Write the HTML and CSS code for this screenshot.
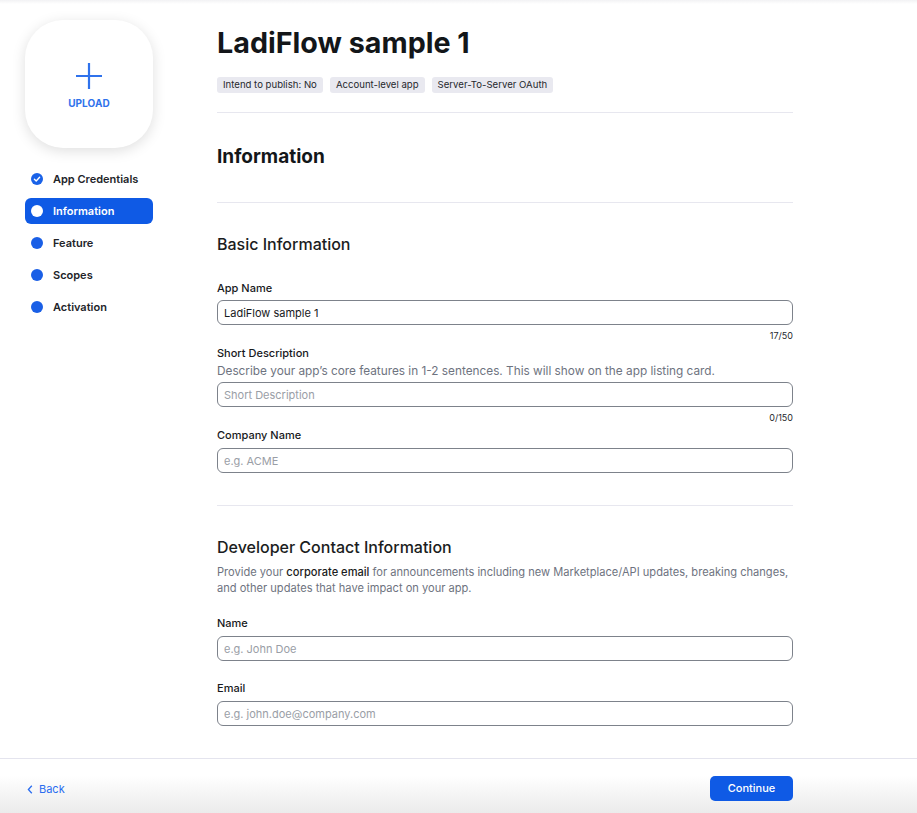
FILE: index.html
```html
<!DOCTYPE html>
<html lang="en">
<head>
<meta charset="utf-8">
<title>LadiFlow sample 1</title>
<link rel="stylesheet" href="styles.css">
</head>
<body>
<div class="page">
  <div class="content">
    <aside class="sidebar">
      <div class="upload">
        <svg class="plus" width="26" height="26" viewBox="0 0 26 26"><path d="M13 0V26M0 13H26" stroke="#2f72ec" stroke-width="2.2" fill="none"/></svg>
        <span class="upload-text">UPLOAD</span>
      </div>
      <ul class="steps">
        <li class="step done">
          <span class="dot check"><svg width="12" height="12" viewBox="0 0 12 12"><circle cx="6" cy="6" r="6" fill="#1a62e8"/><path d="M3.4 6.2 5.2 7.9 8.6 4.3" stroke="#fff" stroke-width="1.4" fill="none" stroke-linecap="round" stroke-linejoin="round"/></svg></span>
          <span class="label">App Credentials</span>
        </li>
        <li class="step active"><span class="dot"></span><span class="label">Information</span></li>
        <li class="step"><span class="dot"></span><span class="label">Feature</span></li>
        <li class="step"><span class="dot"></span><span class="label">Scopes</span></li>
        <li class="step"><span class="dot"></span><span class="label">Activation</span></li>
      </ul>
    </aside>
    <main class="main">
      <h1 class="title">LadiFlow sample 1</h1>
      <div class="chips">
        <span class="chip">Intend to publish: No</span>
        <span class="chip">Account-level app</span>
        <span class="chip">Server-To-Server OAuth</span>
      </div>
      <hr class="divider first">
      <h2 class="section-title">Information</h2>
      <hr class="divider second">
      <h3 class="sub-title">Basic Information</h3>

      <div class="field f-appname">
        <label class="field-label">App Name</label>
        <input class="input" type="text" value="LadiFlow sample 1">
        <div class="counter">17/50</div>
      </div>
      <div class="field f-short">
        <label class="field-label">Short Description</label>
        <p class="help short-help">Describe your app’s core features in 1-2 sentences. This will show on the app listing card.</p>
        <input class="input" type="text" placeholder="Short Description">
        <div class="counter">0/150</div>
      </div>
      <div class="field f-company">
        <label class="field-label">Company Name</label>
        <input class="input" type="text" placeholder="e.g. ACME">
      </div>

      <hr class="divider third">
      <h3 class="sub-title dev">Developer Contact Information</h3>
      <p class="help desc">Provide your <strong>corporate email</strong> for announcements including new Marketplace/API updates, breaking changes, and other updates that have impact on your app.</p>
      <div class="field f-name">
        <label class="field-label">Name</label>
        <input class="input" type="text" placeholder="e.g. John Doe">
      </div>
      <div class="field f-email">
        <label class="field-label">Email</label>
        <input class="input" type="text" placeholder="e.g. john.doe@company.com">
      </div>
    </main>
  </div>
  <footer class="footer">
    <a class="back" href="#"><svg width="6" height="9" viewBox="0 0 6 9"><path d="M4.8 0.8 1.4 4.5 4.8 8.2" stroke="#2a6df0" stroke-width="1.3" fill="none"/></svg><span>Back</span></a>
    <button class="continue" type="button">Continue</button>
  </footer>
</div>
</body>
</html>
```

FILE: styles.css
```css
* { box-sizing: border-box; }
html, body { margin: 0; padding: 0; }
body {
  font-family: Inter, "Noto Sans", sans-serif;
  color: #131619;
  background: linear-gradient(#f2f2f4, #ffffff 4px);
}
.page {
  height: 813px;
  display: flex;
  flex-direction: column;
}
.content {
  flex: 1;
  display: flex;
  overflow: hidden;
  min-height: 0;
}
.sidebar {
  width: 153px;
  padding: 20px 0 0 25px;
  flex-shrink: 0;
}
.upload {
  width: 128px;
  height: 128px;
  border-radius: 38px;
  background: #fff;
  box-shadow: 0 3px 14px rgba(0, 0, 0, 0.13);
  display: flex;
  flex-direction: column;
  align-items: center;
  padding-top: 43px;
}
.upload-text {
  margin-top: 8px;
  font-size: 10px;
  font-weight: 700;
  color: #2f72ec;
  letter-spacing: 0.1px;
}
.steps {
  list-style: none;
  margin: 18px 0 0;
  padding: 0;
  display: flex;
  flex-direction: column;
  gap: 6px;
}
.step {
  height: 26px;
  display: flex;
  align-items: center;
  gap: 10px;
  padding-left: 6px;
  border-radius: 6px;
  font-size: 11px;
  font-weight: 600;
  color: #222429;
}
.dot {
  width: 12px;
  height: 12px;
  border-radius: 50%;
  background: #1a5fe6;
  flex-shrink: 0;
  display: flex;
}
.dot.check { background: none; }
.step.active {
  background: #0f5ae5;
  color: #fff;
}
.step.active .dot { background: #fff; }

.main {
  width: 576px;
  margin-left: 64px;
  padding-top: 26px;
}
.title {
  margin: 0;
  font-size: 28.7px;
  line-height: 34px;
  font-weight: 700;
  letter-spacing: 0;
  color: #131619;
}
.chips {
  display: flex;
  gap: 7px;
  margin-top: 17px;
}
.chip {
  height: 16px;
  line-height: 16px;
  padding: 0 6px;
  background: #e9e9f0;
  border-radius: 3px;
  font-size: 9.6px;
  color: #26282d;
}
.divider {
  border: 0;
  border-top: 1px solid #e7e7ef;
  margin: 0;
}
.divider.first { margin-top: 19px; }
.divider.second { margin-top: 33px; }
.divider.third { margin-top: 32px; }
.section-title {
  margin: 32px 0 0;
  font-size: 19px;
  line-height: 24px;
  font-weight: 700;
}
.sub-title {
  margin: 31px 0 0;
  font-size: 16px;
  line-height: 20px;
  font-weight: 500;
  color: #1b1d21;
}
.field { display: flex; flex-direction: column; }
.field-label {
  font-size: 11px;
  line-height: 14px;
  font-weight: 500;
  color: #17191c;
}
.help {
  margin: 4px 0 0;
  font-size: 11px;
  line-height: 14px;
  color: #6e7380;
}
.short-help { font-size: 11.8px; }
.help strong { font-weight: 500; color: #1b1d21; }
.input {
  margin-top: 5px;
  height: 25px;
  width: 100%;
  border: 1px solid #7d828b;
  border-radius: 6px;
  padding: 0 6px;
  font-family: Inter, "Noto Sans", sans-serif;
  font-size: 11px;
  color: #17191c;
  background: #fff;
  outline: none;
}
.input::placeholder { color: #9a9ea6; }
.counter {
  margin-top: 5px;
  text-align: right;
  font-size: 9px;
  line-height: 12px;
  color: #26282d;
}
.f-appname { margin-top: 27px; }
.f-short { margin-top: 4px; }
.f-short .input { margin-top: 4px; }
.f-company { margin-top: 4px; }
.f-company .input { margin-top: 6px; }
.desc { margin-top: 7px; line-height: 16px; font-size: 11.1px; }
.f-name { margin-top: 20px; }
.f-name .input { margin-top: 6px; }
.f-email { margin-top: 20px; }
.f-email .input { margin-top: 6px; }

.footer {
  height: 55px;
  flex-shrink: 0;
  border-top: 1px solid #e4e4ee;
  background: linear-gradient(#ffffff 30%, #ebebeb);
  display: flex;
  align-items: center;
  justify-content: space-between;
  padding: 0 124px 0 27px;
}
.back {
  display: flex;
  align-items: center;
  gap: 6px;
  color: #2a6df0;
  text-decoration: none;
  font-size: 11px;
  margin-top: 6px;
}
.continue {
  width: 83px;
  height: 25px;
  border: 0;
  border-radius: 5px;
  background: #0f5ae5;
  color: #fff;
  font-family: Inter, "Noto Sans", sans-serif;
  font-size: 11px;
  font-weight: 500;
  margin-top: 4px;
}
```
